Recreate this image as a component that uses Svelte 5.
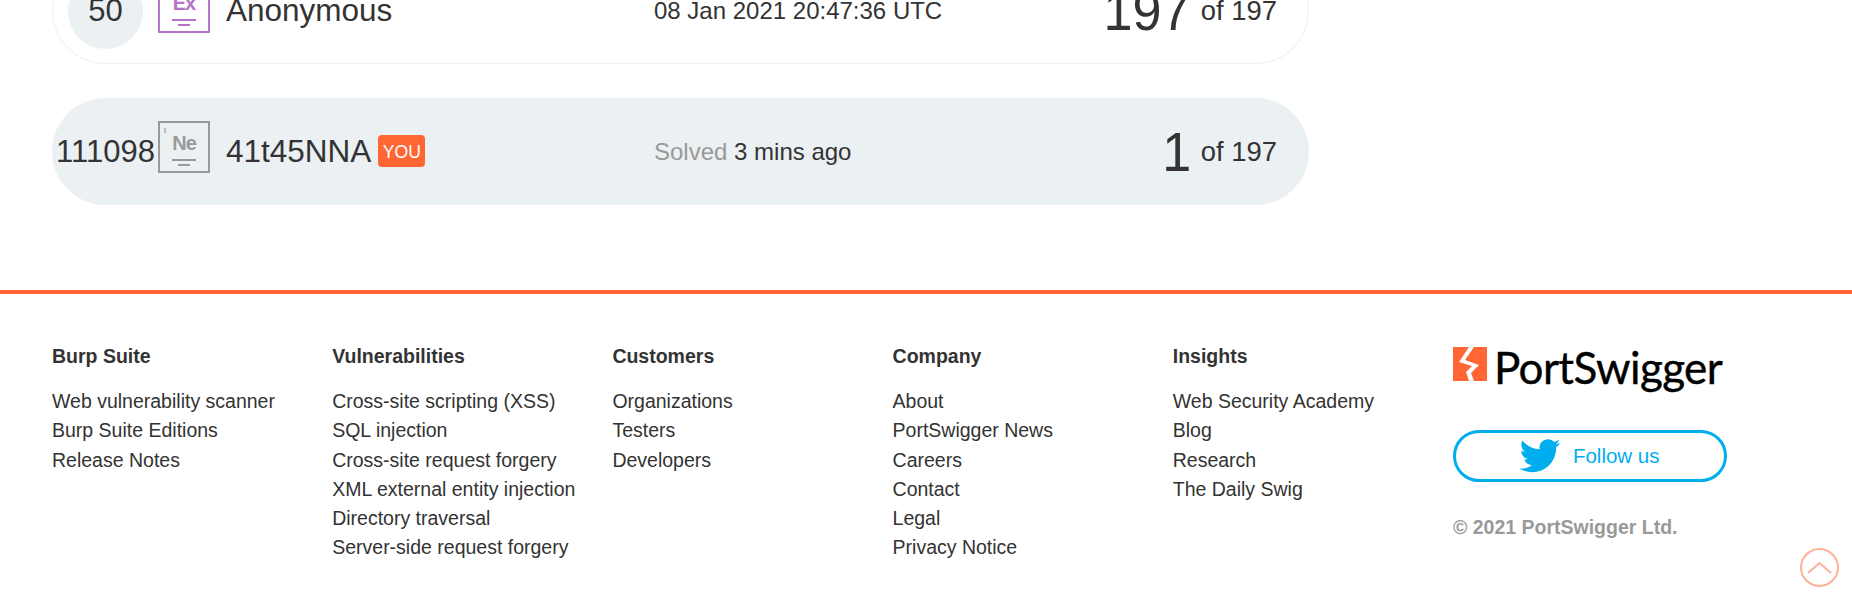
<script>
	const columns = [
		{ title: 'Burp Suite', links: ['Web vulnerability scanner', 'Burp Suite Editions', 'Release Notes'] },
		{
			title: 'Vulnerabilities',
			links: [
				'Cross-site scripting (XSS)',
				'SQL injection',
				'Cross-site request forgery',
				'XML external entity injection',
				'Directory traversal',
				'Server-side request forgery'
			]
		},
		{ title: 'Customers', links: ['Organizations', 'Testers', 'Developers'] },
		{ title: 'Company', links: ['About', 'PortSwigger News', 'Careers', 'Contact', 'Legal', 'Privacy Notice'] },
		{ title: 'Insights', links: ['Web Security Academy', 'Blog', 'Research', 'The Daily Swig'] }
	];
</script>

<div class="page">
	<section class="board">
		<div class="row">
			<div class="rank circle">50</div>
			<div class="element purple">
				<span class="tick"></span>
				<span class="symbol">Ex</span>
				<span class="bar long"></span>
				<span class="bar short"></span>
			</div>
			<div class="name">Anonymous</div>
			<div class="when">08 Jan 2021 20:47:36 UTC</div>
			<div class="score"><span class="big">197</span> <span>of 197</span></div>
		</div>
		<div class="row mine">
			<div class="rank">111098</div>
			<div class="element grey">
				<span class="tick"></span>
				<span class="symbol">Ne</span>
				<span class="bar long"></span>
				<span class="bar short"></span>
			</div>
			<div class="name">41t45NNA <span class="you">YOU</span></div>
			<div class="when"><span class="muted">Solved</span> 3 mins ago</div>
			<div class="score"><span class="big">1</span> <span>of 197</span></div>
		</div>
	</section>

	<footer>
		{#each columns as col}
			<div class="col">
				<h4>{col.title}</h4>
				{#each col.links as link}
					<a href="#top">{link}</a>
				{/each}
			</div>
		{/each}
		<div class="col brand">
			<div class="logo">
				<svg width="34" height="34" viewBox="0 0 34 34">
					<rect width="34" height="34" fill="#ff6633" />
					<path d="M16 0h5l-9 13 14 5-8 8 3 8h-5l-3-9 6-6-13-4z" fill="#fff" />
				</svg>
				<span>PortSwigger</span>
			</div>
			<a class="follow" href="#top">
				<svg width="42" height="34" viewBox="0 0 24 20">
					<path
						d="M24 2.4c-.9.4-1.8.7-2.8.8 1-.6 1.800-1.600 2.200-2.700-1 .6-2 1-3.100 1.200C19.300.7 18 .1 16.600.1c-2.700 0-4.900 2.200-4.900 4.900 0 .4 0 .8.100 1.100C7.700 5.900 4.100 4 1.700.9c-.4.700-.7 1.600-.7 2.500 0 1.700.9 3.200 2.200 4.100-.8 0-1.600-.2-2.200-.6v.1c0 2.400 1.700 4.400 3.900 4.800-.4.1-.8.2-1.300.2-.3 0-.6 0-.9-.1.6 2 2.400 3.400 4.600 3.400-1.700 1.300-3.800 2.100-6.100 2.100-.4 0-.8 0-1.200-.1 2.200 1.400 4.800 2.200 7.500 2.200 9.100 0 14-7.500 14-14v-.6c1-.7 1.800-1.600 2.500-2.500z"
						fill="#00aeef"
					/>
				</svg>
				<span>Follow us</span>
			</a>
			<p class="copy">© 2021 PortSwigger Ltd.</p>
		</div>
	</footer>

	<div class="to-top">
		<svg width="25" height="12" viewBox="0 0 25 12"><path d="M1 11 12.500 1 24 11" fill="none" stroke="#ff6633" stroke-width="2" /></svg>
	</div>
</div>

<style>
	:global(body) {
		background: #fff;
		overflow: hidden;
	}
	.page {
		font-family: 'Liberation Sans', Arial, sans-serif;
		color: #333;
		height: 604px;
		overflow: hidden;
		position: relative;
	}
	.board {
		width: 1257px;
		margin: -43px 0 0 52px;
		display: flex;
		flex-direction: column;
		gap: 34px;
	}
	.row {
		box-sizing: border-box;
		height: 107px;
		border: 1px solid #ebf0f2;
		border-radius: 53px;
		display: flex;
		align-items: center;
		padding: 0 31px 0 15px;
	}
	.mine {
		background: #ebf0f2;
	}
	.rank {
		width: 75px;
		height: 75px;
		flex: none;
		display: flex;
		align-items: center;
		justify-content: center;
		font-size: 31px;
	}
	.circle {
		background: #ebf0f2;
		border-radius: 50%;
		margin-top: 1px;
	}
	.element {
		box-sizing: border-box;
		position: relative;
		width: 52px;
		height: 52px;
		flex: none;
		margin: -9px 0 0 15px;
		border: 2px solid;
		display: flex;
		flex-direction: column;
		align-items: center;
	}
	.purple {
		color: #b574c8;
		margin-top: -7px;
	}
	.grey {
		color: #999;
	}
	.tick {
		position: absolute;
		left: 4px;
		top: 5px;
		width: 2px;
		height: 5px;
		background: currentColor;
		opacity: 0.6;
	}
	.symbol {
		font-size: 20px;
		font-weight: 700;
		line-height: 23px;
		letter-spacing: -1px;
		margin-top: 9px;
		height: 22px;
	}
	.bar {
		height: 2px;
		background: currentColor;
		width: 24px;
		margin-top: 5px;
	}
	.bar.short {
		width: 12px;
		margin-top: 3px;
	}
	.name {
		margin-left: 16px;
		font-size: 31.500px;
		width: 428px;
		flex: none;
		white-space: nowrap;
		display: flex;
		align-items: center;
		gap: 7px;
	}
	.you {
		box-sizing: border-box;
		background: #ff6633;
		color: #fff;
		font-size: 17.600px;
		border-radius: 4px;
		height: 32px;
		width: 47px;
		padding-top: 3px;
		margin-top: -1px;
		display: inline-flex;
		align-items: center;
		justify-content: center;
	}
	.when {
		font-size: 24px;
		white-space: nowrap;
	}
	.muted {
		color: #999;
	}
	.score {
		margin-left: auto;
		font-size: 27.400px;
		display: flex;
		align-items: center;
		gap: 10px;
	}
	.big {
		font-size: 56px;
		line-height: 1;
		transform: scaleX(0.93);
		transform-origin: right center;
	}
	footer {
		margin-top: 85px;
		border-top: 4px solid #ff6633;
		padding: 50px 0 0 52px;
		display: grid;
		grid-template-columns: repeat(6, 280.200px);
		font-size: 19.500px;
	}
	.col {
		display: flex;
		flex-direction: column;
	}
	h4 {
		margin: 0 0 19px;
		font-size: 19.500px;
		line-height: 24px;
		font-weight: 700;
	}
	.col a {
		color: #333;
		text-decoration: none;
		line-height: 29.300px;
	}
	.logo {
		display: flex;
		align-items: flex-start;
		gap: 7px;
		height: 50px;
		margin-top: 3px;
	}
	.logo span {
		font-family: Lato, sans-serif;
		font-size: 44px;
		letter-spacing: -0.6px;
		line-height: 40px;
		color: #000;
		white-space: nowrap;
		-webkit-text-stroke: 0.4px #000;
	}
	.col a.follow {
		box-sizing: border-box;
		width: 274px;
		height: 52px;
		margin-top: 33px;
		border: 3px solid #00aeef;
		border-radius: 26px;
		display: flex;
		align-items: center;
		padding-left: 63px;
		gap: 12px;
		color: #00aeef;
		font-size: 20.500px;
	}
	.copy {
		margin: 34px 0 0;
		font-weight: 700;
		color: #999;
	}
	.to-top {
		position: absolute;
		left: 1800px;
		top: 548px;
		box-sizing: border-box;
		width: 39px;
		height: 39px;
		border: 2px solid #ff6633;
		border-radius: 50%;
		opacity: 0.5;
		display: flex;
		align-items: center;
		justify-content: center;
	}
</style>
